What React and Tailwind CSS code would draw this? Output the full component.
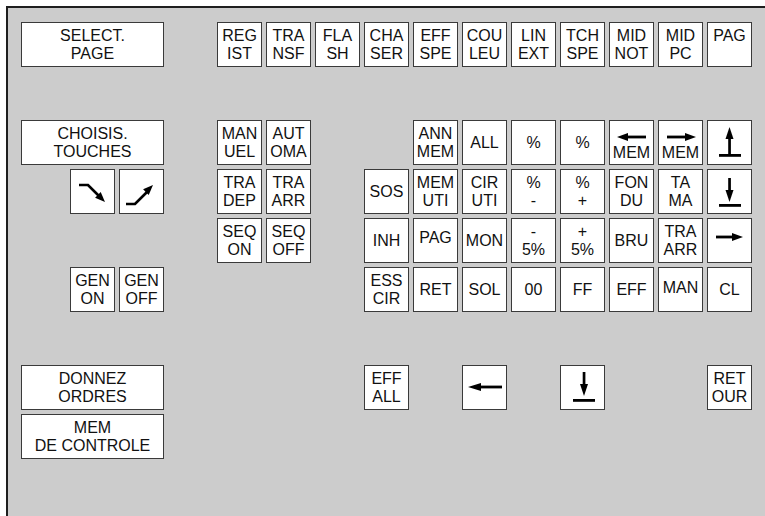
import React from "react";

// shapes drawn in the 45x45 box's own coordinates
const ArrowH = ({ x1, x2, y, dir, head = 11, h = 8 }) => {
  const tip = dir === "left" ? x1 : x2;
  const base = dir === "left" ? x1 + head : x2 - head;
  const s1 = dir === "left" ? base - 1 : x1;
  const s2 = dir === "left" ? x2 : base + 1;
  return (
    <>
      <rect x={s1} y={y - 1.4} width={s2 - s1} height="2.8" />
      <polygon points={`${tip},${y} ${base},${y - h / 2} ${base},${y + h / 2}`} />
    </>
  );
};

const Bar = ({ x, y, w }) => <rect x={x} y={y} width={w} height="2.8" />;

const icons = {
  upBar: (
    <svg viewBox="1 1 43 43" className="w-[43px] h-[43px]">
      <polygon points="22.5,7 18.5,19 26.5,19" />
      <rect x="21.2" y="18" width="2.7" height="17" />
      <Bar x={12} y={34} w={22} />
    </svg>
  ),
  downBar: (
    <svg viewBox="1 1 43 43" className="w-[43px] h-[43px]">
      <rect x="21.2" y="9" width="2.7" height="14" />
      <polygon points="22.5,33 18.5,21 26.5,21" />
      <Bar x={12} y={35} w={22} />
    </svg>
  ),
  downBar2: (
    <svg viewBox="1 1 43 43" className="w-[43px] h-[43px]">
      <rect x="22.7" y="7" width="2.7" height="13" />
      <polygon points="24,31 20,19 28,19" />
      <Bar x={13} y={34} w={22} />
    </svg>
  ),
  right: (
    <svg viewBox="1 1 43 43" className="w-[43px] h-[43px]">
      <ArrowH x1={9} x2={36} y={19} dir="right" />
    </svg>
  ),
  left: (
    <svg viewBox="1 1 43 43" className="w-[43px] h-[43px]">
      <ArrowH x1={6} x2={40} y={22} dir="left" head={13} />
    </svg>
  ),
  diagDown: (
    <svg viewBox="1 1 43 43" className="w-[43px] h-[43px]">
      <polyline points="9,16 18,16 29,27" fill="none" stroke="black" strokeWidth="2.7" />
      <polygon points="35,33 25.1,28.7 30.7,23.1" />
    </svg>
  ),
  diagUp: (
    <svg viewBox="1 1 43 43" className="w-[43px] h-[43px]">
      <polyline points="7,35 16,35 28,23" fill="none" stroke="black" strokeWidth="2.7" />
      <polygon points="34,16 29.7,25.9 24.1,20.3" />
    </svg>
  ),
};

const memArrow = (dir) => (
  <>
    <svg viewBox="1 1 43 23" className="w-[43px] h-[23px] shrink-0">
      {dir === "left" ? (
        <ArrowH x1={8} x2={37} y={17} dir="left" />
      ) : (
        <ArrowH x1={9} x2={38} y={17} dir="right" />
      )}
    </svg>
    <span>MEM</span>
  </>
);

const keys = [
  { c: "col-start-1 col-span-3 row-start-1", t: ["SELECT.", "PAGE"] },
  { c: "col-start-5 row-start-1", t: ["REG", "IST"] },
  { c: "col-start-6 row-start-1", t: ["TRA", "NSF"] },
  { c: "col-start-7 row-start-1", t: ["FLA", "SH"] },
  { c: "col-start-8 row-start-1", t: ["CHA", "SER"] },
  { c: "col-start-9 row-start-1", t: ["EFF", "SPE"] },
  { c: "col-start-10 row-start-1", t: ["COU", "LEU"] },
  { c: "col-start-11 row-start-1", t: ["LIN", "EXT"] },
  { c: "col-start-12 row-start-1", t: ["TCH", "SPE"] },
  { c: "col-start-13 row-start-1", t: ["MID", "NOT"] },
  { c: "col-start-14 row-start-1", t: ["MID", "PC"] },
  { c: "col-start-15 row-start-1", t: ["PAG", "\u00a0"] },

  { c: "col-start-1 col-span-3 row-start-3", t: ["CHOISIS.", "TOUCHES"] },
  { c: "col-start-5 row-start-3", t: ["MAN", "UEL"] },
  { c: "col-start-6 row-start-3", t: ["AUT", "OMA"] },
  { c: "col-start-9 row-start-3", t: ["ANN", "MEM"] },
  { c: "col-start-10 row-start-3", t: ["ALL"] },
  { c: "col-start-11 row-start-3", t: ["%"] },
  { c: "col-start-12 row-start-3", t: ["%"] },
  { c: "col-start-13 row-start-3 justify-start", node: memArrow("left") },
  { c: "col-start-14 row-start-3 justify-start", node: memArrow("right") },
  { c: "col-start-15 row-start-3", node: icons.upBar },

  { c: "col-start-2 row-start-4", node: icons.diagDown },
  { c: "col-start-3 row-start-4", node: icons.diagUp },
  { c: "col-start-5 row-start-4", t: ["TRA", "DEP"] },
  { c: "col-start-6 row-start-4", t: ["TRA", "ARR"] },
  { c: "col-start-8 row-start-4", t: ["SOS"] },
  { c: "col-start-9 row-start-4", t: ["MEM", "UTI"] },
  { c: "col-start-10 row-start-4", t: ["CIR", "UTI"] },
  { c: "col-start-11 row-start-4", t: ["%", "-"] },
  { c: "col-start-12 row-start-4", t: ["%", "+"] },
  { c: "col-start-13 row-start-4", t: ["FON", "DU"] },
  { c: "col-start-14 row-start-4", t: ["TA", "MA"] },
  { c: "col-start-15 row-start-4", node: icons.downBar },

  { c: "col-start-5 row-start-5", t: ["SEQ", "ON"] },
  { c: "col-start-6 row-start-5", t: ["SEQ", "OFF"] },
  { c: "col-start-8 row-start-5", t: ["INH"] },
  { c: "col-start-9 row-start-5 pb-[5px]", t: ["PAG"] },
  { c: "col-start-10 row-start-5", t: ["MON"] },
  { c: "col-start-11 row-start-5", t: ["-", "5%"] },
  { c: "col-start-12 row-start-5", t: ["+", "5%"] },
  { c: "col-start-13 row-start-5", t: ["BRU"] },
  { c: "col-start-14 row-start-5", t: ["TRA", "ARR"] },
  { c: "col-start-15 row-start-5", node: icons.right },

  { c: "col-start-2 row-start-6", t: ["GEN", "ON"] },
  { c: "col-start-3 row-start-6", t: ["GEN", "OFF"] },
  { c: "col-start-8 row-start-6", t: ["ESS", "CIR"] },
  { c: "col-start-9 row-start-6", t: ["RET"] },
  { c: "col-start-10 row-start-6", t: ["SOL"] },
  { c: "col-start-11 row-start-6", t: ["00"] },
  { c: "col-start-12 row-start-6", t: ["FF"] },
  { c: "col-start-13 row-start-6", t: ["EFF"] },
  { c: "col-start-14 row-start-6 pb-[3px]", t: ["MAN"] },
  { c: "col-start-15 row-start-6", t: ["CL"] },

  { c: "col-start-1 col-span-3 row-start-8", t: ["DONNEZ", "ORDRES"] },
  { c: "col-start-8 row-start-8", t: ["EFF", "ALL"] },
  { c: "col-start-10 row-start-8", node: icons.left },
  { c: "col-start-12 row-start-8", node: icons.downBar2 },
  { c: "col-start-15 row-start-8", t: ["RET", "OUR"] },

  { c: "col-start-1 col-span-3 row-start-9", t: ["MEM", "DE CONTROLE"] },
];

export default function App() {
  return (
    <div className="w-[765px] h-[516px] bg-white pt-[6px] pl-[6px] overflow-hidden">
      <div className="h-full bg-[#cccccc] border-t-2 border-l-2 border-[#1e1e1e] pl-[13px] pt-[14px]">
        <div
          className="grid grid-cols-[repeat(15,45px)] grid-rows-[repeat(9,45px)] gap-[4px] text-[16px] leading-[18px] text-[#111]"
          style={{ fontFamily: '"Liberation Sans", Arial, sans-serif' }}
        >
          {keys.map((k, i) => (
            <div
              key={i}
              className={`flex flex-col items-center justify-center bg-white border border-[#3a3a3a] text-center whitespace-nowrap ${k.c}`}
            >
              {k.node ? k.node : k.t.map((line, j) => <span key={j}>{line}</span>)}
            </div>
          ))}
        </div>
      </div>
    </div>
  );
}
